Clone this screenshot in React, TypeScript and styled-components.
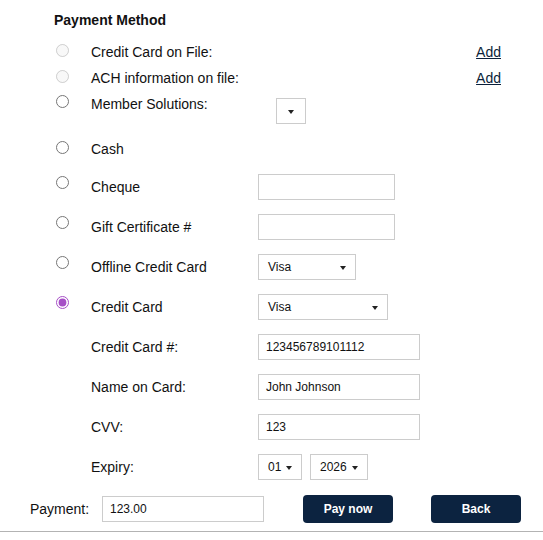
import React from "react";
import styled, { createGlobalStyle } from "styled-components";

const GlobalStyle = createGlobalStyle`
    html, body {
        margin: 0;
        padding: 0;
        background: #ffffff;
    }
    body {
        font-family: "Liberation Sans", Arial, sans-serif;
        color: #111111;
    }
`;

const Page = styled.div`
    width: 543px;
    padding-top: 12px;
    display: flex;
    flex-direction: column;
`;

const Title = styled.div`
    margin-left: 54px;
    font-size: 14px;
    font-weight: bold;
    line-height: 17px;
`;

const Row = styled.div<{ $top: number }>`
    display: grid;
    grid-template-columns: 35px 167px 1fr;
    align-items: start;
    margin-top: ${(p) => p.$top}px;
    margin-left: 56px;
    margin-right: 42px;
`;

const RadioCell = styled.div<{ $dy: number }>`
    padding-top: ${(p) => p.$dy}px;
    height: 13px;
`;

const Radio = styled.input.attrs({ type: "radio", name: "method" })`
    display: block;
    margin: 0;
    width: 13px;
    height: 13px;
    accent-color: #a64fc6;
`;

const Label = styled.div<{ $h: number }>`
    font-size: 14px;
    line-height: ${(p) => p.$h}px;
    white-space: nowrap;
`;

const Control = styled.div<{ $indent?: number; $dy?: number }>`
    display: flex;
    align-items: flex-start;
    gap: 8px;
    padding-left: ${(p) => p.$indent || 0}px;
    padding-top: ${(p) => p.$dy || 0}px;
`;

const AddLink = styled.a`
    justify-self: end;
    font-size: 14px;
    line-height: 20px;
    color: #0b1f3a;
    text-decoration: underline;
`;

const TextBox = styled.div<{ $w: number }>`
    box-sizing: border-box;
    width: ${(p) => p.$w}px;
    height: 26px;
    border: 1px solid #cccccc;
    padding-left: 7px;
    font-size: 12px;
    line-height: 24px;
    color: #111111;
    background: #ffffff;
`;

const Select = styled.div<{ $w: number; $center?: boolean }>`
    box-sizing: border-box;
    width: ${(p) => p.$w}px;
    height: 26px;
    border: 1px solid #cccccc;
    padding: ${(p) => (p.$center ? "0" : "0 9px")};
    display: flex;
    align-items: center;
    justify-content: ${(p) => (p.$center ? "center" : "space-between")};
    gap: 5px;
    font-size: 12px;
    color: #111111;
    background: #ffffff;
`;

const Caret = styled.span`
    width: 0;
    height: 0;
    border-left: 3.5px solid transparent;
    border-right: 3.5px solid transparent;
    border-top: 4px solid #222222;
    margin-top: 1px;
`;

const PayRow = styled.div`
    display: flex;
    align-items: center;
    margin-top: 15px;
    margin-left: 30px;
    height: 28px;
`;

const PayLabel = styled.div`
    width: 72px;
    font-size: 14px;
`;

const Button = styled.button<{ $left: number }>`
    margin-left: ${(p) => p.$left}px;
    width: 90px;
    height: 28px;
    border: none;
    border-radius: 4px;
    background: #0c2340;
    color: #ffffff;
    font-family: "Liberation Sans", Arial, sans-serif;
    font-size: 12px;
    font-weight: bold;
`;

const Divider = styled.div`
    margin-top: 8px;
    height: 1px;
    background: #b3b3b3;
`;

const App: React.FC = () => {
    return (
        <>
            <GlobalStyle />
            <Page>
                <Title>Payment Method</Title>

                <Row $top={13}>
                    <RadioCell $dy={2}>
                        <Radio disabled />
                    </RadioCell>
                    <Label $h={20}>Credit Card on File:</Label>
                    <AddLink href='#'>Add</AddLink>
                </Row>
                <Row $top={6}>
                    <RadioCell $dy={2}>
                        <Radio disabled />
                    </RadioCell>
                    <Label $h={20}>ACH information on file:</Label>
                    <AddLink href='#'>Add</AddLink>
                </Row>
                <Row $top={6}>
                    <RadioCell $dy={1}>
                        <Radio />
                    </RadioCell>
                    <Label $h={20}>Member Solutions:</Label>
                    <Control $indent={18} $dy={4}>
                        <Select $w={30} $center>
                            <Caret />
                        </Select>
                    </Control>
                </Row>

                <Row $top={12}>
                    <RadioCell $dy={5}>
                        <Radio />
                    </RadioCell>
                    <Label $h={26}>Cash</Label>
                </Row>
                <Row $top={12}>
                    <RadioCell $dy={2}>
                        <Radio />
                    </RadioCell>
                    <Label $h={26}>Cheque</Label>
                    <Control>
                        <TextBox $w={137} />
                    </Control>
                </Row>
                <Row $top={14}>
                    <RadioCell $dy={2}>
                        <Radio />
                    </RadioCell>
                    <Label $h={26}>Gift Certificate #</Label>
                    <Control>
                        <TextBox $w={137} />
                    </Control>
                </Row>
                <Row $top={14}>
                    <RadioCell $dy={2}>
                        <Radio />
                    </RadioCell>
                    <Label $h={26}>Offline Credit Card</Label>
                    <Control>
                        <Select $w={98}>
                            Visa
                            <Caret />
                        </Select>
                    </Control>
                </Row>
                <Row $top={14}>
                    <RadioCell $dy={2}>
                        <Radio defaultChecked />
                    </RadioCell>
                    <Label $h={26}>Credit Card</Label>
                    <Control>
                        <Select $w={130}>
                            Visa
                            <Caret />
                        </Select>
                    </Control>
                </Row>
                <Row $top={14}>
                    <span />
                    <Label $h={26}>Credit Card #:</Label>
                    <Control>
                        <TextBox $w={162}>123456789101112</TextBox>
                    </Control>
                </Row>
                <Row $top={14}>
                    <span />
                    <Label $h={26}>Name on Card:</Label>
                    <Control>
                        <TextBox $w={162}>John Johnson</TextBox>
                    </Control>
                </Row>
                <Row $top={14}>
                    <span />
                    <Label $h={26}>CVV:</Label>
                    <Control>
                        <TextBox $w={162}>123</TextBox>
                    </Control>
                </Row>
                <Row $top={14}>
                    <span />
                    <Label $h={26}>Expiry:</Label>
                    <Control>
                        <Select $w={44}>
                            01
                            <Caret />
                        </Select>
                        <Select $w={58}>
                            2026
                            <Caret />
                        </Select>
                    </Control>
                </Row>

                <PayRow>
                    <PayLabel>Payment:</PayLabel>
                    <TextBox $w={162}>123.00</TextBox>
                    <Button $left={39}>Pay now</Button>
                    <Button $left={38}>Back</Button>
                </PayRow>
                <Divider />
            </Page>
        </>
    );
};

export default App;
